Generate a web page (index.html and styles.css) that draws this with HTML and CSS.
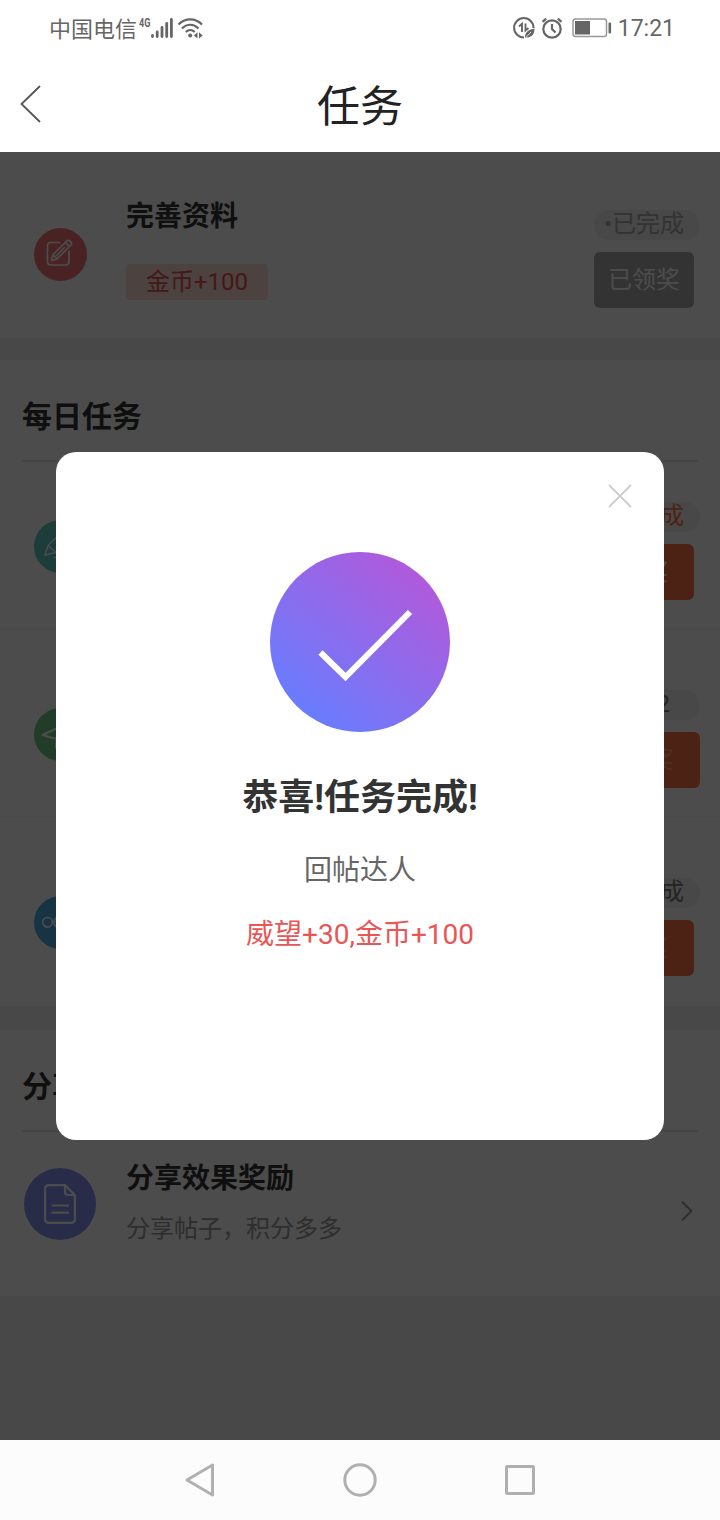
FILE: index.html
```html
<!DOCTYPE html>
<html lang="zh-CN">
<head>
  <meta charset="UTF-8">
  <title>任务</title>
  <link rel="stylesheet" href="styles.css">
</head>
<body>
  <div class="status-bar">
    <span class="carrier">中国电信</span>
    <span class="network">4G</span>
    <svg class="signal" width="22" height="22" viewBox="0 0 22 22" stroke="#666" stroke-width="2.8" stroke-linecap="round">
      <path d="M1.500 19.500v-1M6.200 19.500v-4.500M11 19.500v-9M15.700 19.500v-13M20.400 19.500v-17"/>
    </svg>
    <svg class="wifi" width="27" height="22" viewBox="0 0 27 22" fill="none" stroke="#666" stroke-width="2.2">
      <path d="M1.500 7.500C8 .6 18.500 .6 25 7.500M5 11.500C10 6.500 16.500 6.500 21.500 11.500M8.800 15C11.500 12.300 15 12.300 17.700 15"/>
      <circle cx="13.200" cy="18.500" r="2" fill="#666" stroke="none"/>
      <path d="M16.800 18.500L20.500 15.200V21.500ZM25.700 18.500L22 15.200V21.500Z" fill="#666" stroke="none"/>
    </svg>
    <div class="status-right">
      <svg width="22" height="22" viewBox="0 0 22 22" fill="none" stroke="#666" stroke-width="2">
        <path d="M20.500 11A9.700 9.700 0 1 0 11 20.500"/>
        <path d="M6 9.500L9 6.800V15M12.500 6.500V13.500L15.500 11" stroke-width="1.900"/>
        <path d="M12 21C12 15 15 13 21.500 11.500C21.500 18 18 20.500 13.500 20.500Z" fill="#666" stroke="none"/>
        <path d="M12.500 21L18 15" stroke="#fff" stroke-width=".8"/>
      </svg>
      <svg class="alarm" width="22" height="22" viewBox="0 0 22 22" fill="none" stroke="#666" stroke-width="2.200">
        <circle cx="11" cy="12" r="8.700"/>
        <path d="M11 7V12L14.500 15.500M1.500 4.800L5.200 1.700M20.500 4.800L16.800 1.700"/>
      </svg>
      <svg class="battery" width="40" height="20" viewBox="0 0 40 20">
        <rect x="1" y="1" width="33.500" height="17.500" rx="2.500" fill="none" stroke="#999" stroke-width="1.500"/>
        <rect x="3" y="3" width="15" height="13.500" fill="#666"/>
        <rect x="36.500" y="4.500" width="2.600" height="11" rx="1" fill="#666"/>
      </svg>
      <span class="clock">17:21</span>
    </div>
  </div>

  <header class="header">
    <svg class="back" width="24" height="40" viewBox="0 0 24 40" fill="none" stroke="#555" stroke-width="1.800">
      <path d="M21 2L2.500 20L21 38"/>
    </svg>
    <h1>任务</h1>
  </header>

  <main class="content">
    <section class="group">
      <div class="task task-single">
        <div class="icon red">
          <svg width="28" height="28" viewBox="0 0 28 28" fill="none" stroke="#fff" stroke-width="1.700" stroke-linecap="round" stroke-linejoin="round">
            <path d="M13.500 2.500H5Q1.500 2.500 1.500 6V21.500Q1.500 25 5 25H19.500Q23 25 23 21.500V11"/>
            <path d="M5.500 20.500L7 14.500L21 .9Q22.800 -.2 24.500 1.600Q26.300 3.400 25 5L11 19ZM7 14.500L11 19M19.500 2.500L23.300 6.300M10.500 15.500L18.500 7.500"/>
          </svg>
        </div>
        <div class="info">
          <h3>完善资料</h3>
          <span class="tag">金币+100</span>
        </div>
        <div class="side">
          <span class="state muted">•已完成</span>
          <button class="btn btn-gray">已领奖</button>
        </div>
      </div>
    </section>

    <section class="group">
      <h2>每日任务</h2>
      <div class="task task-first">
        <div class="icon teal">
          <svg width="32" height="28" viewBox="0 0 32 28" fill="none" stroke="#fff" stroke-width="1.500" stroke-linejoin="round">
            <path d="M1 23L4 13.500L17 1L24 8L12 20.500ZM4 13.500L12 20.500M9.500 25.500H28"/>
          </svg>
        </div>
        <div class="side">
          <span class="state orange">•已完成</span>
          <button class="btn">领奖</button>
        </div>
      </div>
      <div class="task">
        <div class="icon green">
          <svg width="38" height="32" viewBox="0 0 38 32" fill="none" stroke="#fff" stroke-width="2.200" stroke-linejoin="round">
            <path d="M13.500 20.500L1.500 17L34 2L26 25L15 20V30L20 23"/>
          </svg>
        </div>
        <div class="side side-narrow">
          <span class="state state-count">•0/2</span>
          <button class="btn btn-off">领奖</button>
        </div>
      </div>
      <div class="task task-last">
        <div class="icon blue">
          <svg width="36" height="20" viewBox="0 0 36 20" fill="none" stroke="#fff" stroke-width="1.700">
            <circle cx="5.500" cy="10.300" r="4.800"/>
            <path d="M14.500 5.500Q9 10.300 14.500 15.100M13 10H23"/>
            <circle cx="30" cy="10" r="4.700"/>
          </svg>
        </div>
        <div class="side">
          <span class="state">•未完成</span>
          <button class="btn btn-off">领奖</button>
        </div>
      </div>
    </section>

    <section class="group">
      <h2>分享任务</h2>
      <div class="share">
        <div class="icon-large">
          <svg width="32" height="40" viewBox="0 0 32 40" fill="none" stroke="#fff" stroke-width="2.200" stroke-linecap="round" stroke-linejoin="round">
            <path d="M21 1.100H5Q1.100 1.100 1.100 5V35Q1.100 38.900 5 38.900H27Q30.900 38.900 30.900 35V11ZM21 1.100V8Q21 11 24 11H30.900M8.500 21.500H24M8.500 28.700H24"/>
          </svg>
        </div>
        <div class="share-info">
          <h3>分享效果奖励</h3>
          <p>分享帖子，积分多多</p>
        </div>
        <svg class="arrow" width="14" height="22" viewBox="0 0 14 22" fill="none" stroke="#999" stroke-width="1.900">
          <path d="M2 1.800L11.500 11L2 20.200"/>
        </svg>
      </div>
    </section>

    <div class="overlay">
      <div class="modal">
        <svg class="close" width="24" height="24" viewBox="0 0 24 24" stroke="#ccc" stroke-width="1.800">
          <path d="M1 1L23 23M23 1L1 23"/>
        </svg>
        <div class="success">
          <svg width="180" height="180" viewBox="0 0 180 180" fill="none" stroke="#fff" stroke-width="6">
            <path d="M50.500 100.500L75.500 125L140 60"/>
          </svg>
        </div>
        <h2 class="modal-title">恭喜!任务完成!</h2>
        <p class="modal-name">回帖达人</p>
        <p class="modal-reward">威望+30,金币+100</p>
      </div>
    </div>
  </main>

  <nav class="nav-bar">
    <svg width="34" height="34" viewBox="0 0 34 34" fill="none" stroke="#b0b0b0" stroke-width="3" stroke-linejoin="round">
      <path d="M29.500 2L4 17L29.500 32Z"/>
    </svg>
    <svg width="34" height="34" viewBox="0 0 34 34" fill="none" stroke="#b0b0b0" stroke-width="3">
      <circle cx="17" cy="17" r="15.200"/>
    </svg>
    <svg width="34" height="34" viewBox="0 0 34 34" fill="none" stroke="#b0b0b0" stroke-width="3">
      <rect x="3.500" y="3.500" width="27" height="27" rx="1"/>
    </svg>
  </nav>
</body>
</html>
```
FILE: styles.css
```css
* {
  box-sizing: border-box;
  margin: 0;
  padding: 0;
}

body {
  width: 720px;
  height: 1520px;
  display: flex;
  flex-direction: column;
  font-family: Roboto, "Noto Sans CJK SC", sans-serif;
  background-color: #fff;
  overflow: hidden;
}

svg {
  display: block;
  flex: none;
  overflow: visible;
}

/* status bar */
.status-bar {
  height: 56px;
  padding: 0 45px 0 49px;
  display: flex;
  align-items: center;
  color: #666;
}

.carrier {
  font-size: 22px;
  line-height: 30px;
  margin-top: 4px;
}

.network {
  font-size: 13px;
  font-weight: bold;
  line-height: 14px;
  width: 12px;
  margin: 0 0 11px 2px;
  transform: scaleX(0.7);
  transform-origin: left;
}

.wifi {
  margin-left: 4px;
}

.status-right {
  margin-left: auto;
  display: flex;
  align-items: center;
}

.alarm {
  margin-left: 6px;
}

.battery {
  margin-left: 9px;
}

.clock {
  font-size: 23px;
  line-height: 30px;
  margin: 2px 0 0 6px;
}

.header {
  height: 96px;
  display: grid;
  grid-template-columns: 60px 1fr 60px;
  align-items: center;
}

.header h1 {
  font-size: 43px;
  font-weight: normal;
  line-height: 60px;
  text-align: center;
  color: #222;
  padding-top: 6px;
}

.back {
  margin-left: 19px;
}

/* task list */
.content {
  height: 1288px;
  position: relative;
  background-color: #f0f0f0;
}

.group {
  background-color: #fff;
  margin-bottom: 24px;
}

.group:first-child {
  margin-bottom: 22px;
}

.group > h2 {
  height: 102px;
  margin: 0 22px;
  padding-top: 12px;
  border-bottom: 2px solid #e6e6e6;
  font-size: 30px;
  font-weight: bold;
  line-height: 90px;
  color: #333;
}

.task {
  height: 188px;
  padding-top: 60px;
  border-bottom: 2px solid #f5f5f5;
  display: flex;
}

.task-single {
  height: 186px;
  padding-top: 58px;
  border-bottom: none;
}

.task-first {
  height: 168px;
  padding-top: 40px;
}

.task-last {
  border-bottom: none;
}

.icon {
  width: 53px;
  height: 53px;
  margin: 17.5px 0 0 33.5px;
  border-radius: 50%;
  display: flex;
  align-items: center;
  justify-content: center;
}

.red {
  background-color: #f47676;
}

.teal {
  background-color: #5ecdc2;
}

.green {
  background-color: #70c98a;
}

.blue {
  background-color: #4fafe4;
}

.info {
  margin: -13px 0 0 39.5px;
}

h3 {
  font-size: 28px;
  line-height: 40px;
  color: #333;
}

.tag {
  display: block;
  width: 142px;
  height: 36px;
  margin-top: 27px;
  border-radius: 4px;
  background-color: #ffdcd2;
  color: #e85050;
  font-size: 24px;
  line-height: 36px;
  text-align: center;
}

.side {
  width: 106px;
  margin: 0 20px 0 auto;
}

.side-narrow {
  width: 100px;
}

.state {
  display: block;
  height: 30px;
  padding-left: 10px;
  border-radius: 15px;
  background-color: #f0f0f0;
  color: #777;
  font-size: 24px;
  line-height: 28px;
  white-space: nowrap;
}

.state.muted {
  color: #aaa;
}

.state.orange {
  color: #ff7443;
}

.state-count {
  padding-left: 25px;
}

.btn {
  display: block;
  width: 100px;
  height: 56px;
  margin-top: 12px;
  border: none;
  border-radius: 6px;
  background-color: #ff7443;
  color: #fff;
  font-family: inherit;
  font-size: 24px;
  line-height: 56px;
}

.btn-gray {
  background-color: #aaa;
}

.btn-off {
  color: #ffa283;
}

.share {
  height: 164px;
  padding: 36px 26px 0 24px;
  display: flex;
}

.icon-large {
  width: 72px;
  height: 72px;
  border-radius: 50%;
  background-color: #8a93f0;
  display: flex;
  align-items: center;
  justify-content: center;
}

.share-info {
  margin: -9px 0 0 30px;
}

.share-info p {
  margin-top: 12px;
  font-size: 24px;
  line-height: 36px;
  color: #999;
}

.arrow {
  margin: 32px 0 0 auto;
}

/* dialog */
.overlay {
  position: absolute;
  inset: 0;
  background-color: rgba(0, 0, 0, 0.7);
  display: flex;
  justify-content: center;
  align-items: center;
}

.modal {
  width: 608px;
  height: 688px;
  border-radius: 20px;
  background-color: #fff;
  text-align: center;
}

.close {
  margin: 32px 32px 0 auto;
}

.success {
  width: 180px;
  height: 180px;
  margin: 44px auto 0;
  border-radius: 50%;
  background: linear-gradient(40deg, #667eff 12%, #b458d9 90%);
}

.modal-title {
  margin-top: 40px;
  font-size: 36px;
  line-height: 52px;
  color: #333;
}

.modal-name {
  margin-top: 27px;
  font-size: 28px;
  line-height: 40px;
  color: #666;
}

.modal-reward {
  margin-top: 24px;
  font-size: 28px;
  line-height: 40px;
  color: #e85656;
}

.nav-bar {
  height: 80px;
  background-color: #fcfcfc;
  display: flex;
  justify-content: center;
  align-items: center;
  gap: 126px;
}
```
